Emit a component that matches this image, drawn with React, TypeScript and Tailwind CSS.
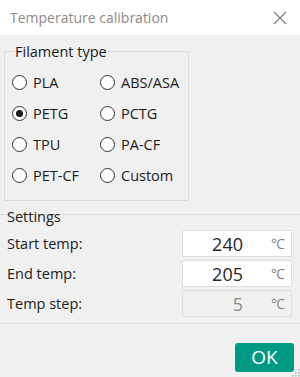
import React from "react";

const font = { fontFamily: '"Segoe UI", "Open Sans", "Noto Sans", sans-serif' };

const materials = [
  ["PLA", "ABS/ASA"],
  ["PETG", "PCTG"],
  ["TPU", "PA-CF"],
  ["PET-CF", "Custom"],
];

function Radio({ label, checked }: { label: string; checked?: boolean }) {
  return (
    <label className="flex items-center gap-[6px] text-[14.5px] text-[#1b1b1b]">
      <span className="w-[15px] h-[15px] rounded-full border border-[#333] bg-white flex items-center justify-center">
        {checked && <span className="w-[7px] h-[7px] rounded-full bg-[#1b1b1b]" />}
      </span>
      {label}
    </label>
  );
}

function TempField({ value, disabled }: { value: string; disabled?: boolean }) {
  return (
    <div
      className={
        "w-[110px] h-[27px] border border-[#dedede] flex items-center " +
        (disabled ? "bg-[#f0f0f0]" : "bg-white")
      }
    >
      <span
        className={
          "w-[60px] text-right text-[18px] leading-none " +
          (disabled ? "text-[#8a8a8a]" : "text-[#262626]")
        }
      >
        {value}
      </span>
      <span className="ml-auto mr-[6px] text-[14px] text-[#8a8a8a]">℃</span>
    </div>
  );
}

export default function App() {
  return (
    <div className="w-[300px] h-[377px] bg-[#f0f0f0] flex flex-col" style={font}>
      {/* title bar */}
      <div className="h-[35px] bg-white flex items-center justify-between pl-[10px] pr-[13px]">
        <span className="text-[14px] text-[#8a8a8a]">Temperature calibration</span>
        <svg width="14" height="14" viewBox="0 0 14 14" stroke="#7a7a7a" strokeWidth="1.1">
          <path d="M1 1L13 13M13 1L1 13" />
        </svg>
      </div>

      {/* filament type */}
      <fieldset className="mt-[7px] ml-[4px] w-[185px] border border-[#dcdcdc] pl-[7px] pr-0 pt-[6px] pb-[9px]">
        <legend className="ml-[2px] px-[1px] text-[14.5px] text-[#1b1b1b] leading-[19px]">
          Filament type
        </legend>
        <div className="flex flex-col">
          {materials.map(([a, b], i) => (
            <div key={a} className="h-[31px] grid grid-cols-[88px_1fr] items-center">
              <Radio label={a} checked={i === 1} />
              <Radio label={b} />
            </div>
          ))}
        </div>
      </fieldset>

      {/* settings */}
      <div className="grid mt-[6px]">
        <div className="col-start-1 row-start-1 h-px bg-[#dcdcdc] mt-[7px]" />
        <span className="col-start-1 row-start-1 pl-[7px] text-[14.5px] text-[#1b1b1b] leading-[20px]">
          Settings
        </span>
      </div>
      <div className="flex flex-col gap-[3px] mt-[3px] pl-[7px] pr-[8px]">
        {[
          ["Start temp:", "240", false],
          ["End temp:", "205", false],
          ["Temp step:", "5", true],
        ].map(([label, value, disabled]) => (
          <div key={label as string} className="flex items-center justify-between">
            <span className="text-[14.5px] text-[#1b1b1b]">{label}</span>
            <TempField value={value as string} disabled={disabled as boolean} />
          </div>
        ))}
      </div>

      {/* footer */}
      <div className="mt-auto h-[54px] border-t border-[#e3e3e3] flex items-start justify-end pr-[6px] pt-[19px] relative">
        <button className="w-[59px] h-[29px] rounded-[3px] bg-[#009a82] text-white text-[19px] leading-none">
          OK
        </button>
        <svg className="absolute right-0 bottom-0" width="8" height="8" viewBox="0 0 8 8" fill="#b0b0b0">
          <rect x="6" y="0" width="1.5" height="1.5" />
          <rect x="3" y="3" width="1.5" height="1.5" />
          <rect x="6" y="3" width="1.5" height="1.5" />
          <rect x="0" y="6" width="1.5" height="1.5" />
          <rect x="3" y="6" width="1.5" height="1.5" />
          <rect x="6" y="6" width="1.5" height="1.5" />
        </svg>
      </div>
    </div>
  );
}
